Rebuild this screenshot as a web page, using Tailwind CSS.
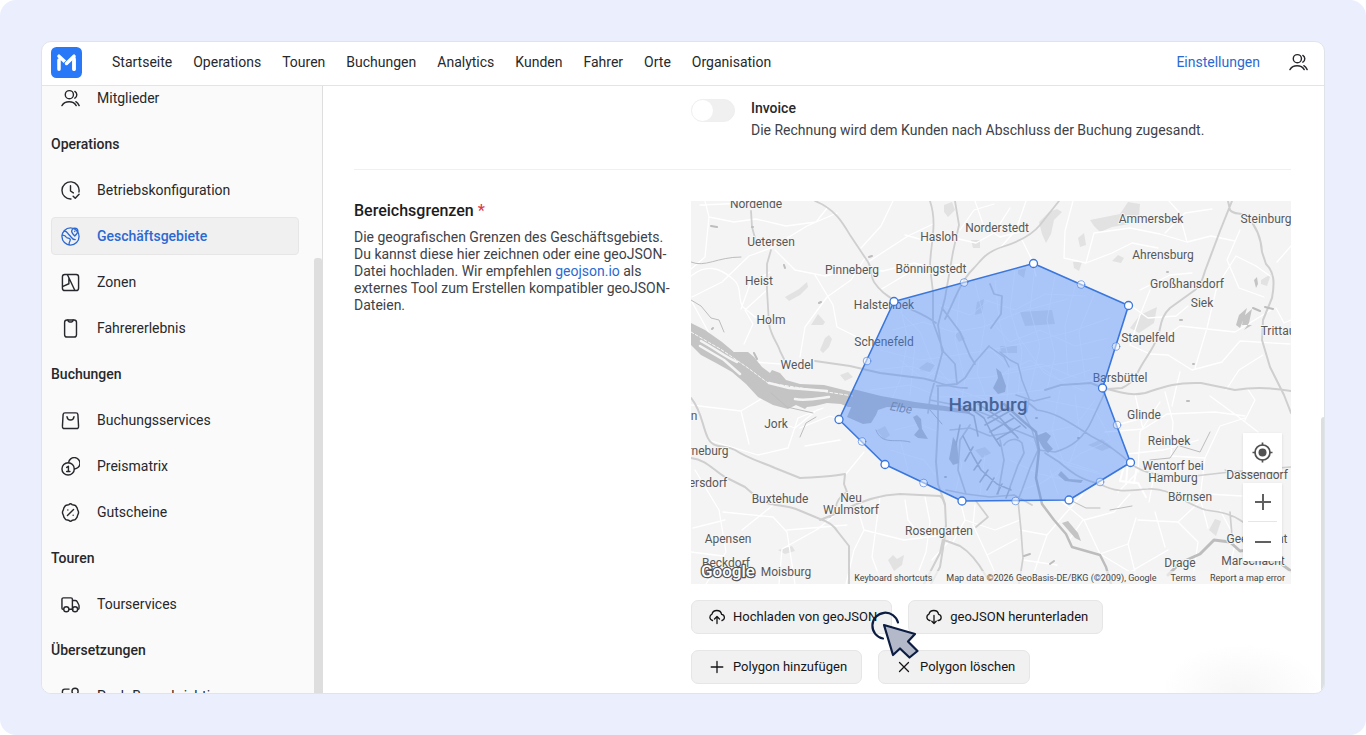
<!DOCTYPE html>
<html lang="de">
<head>
<meta charset="utf-8">
<meta name="viewport" content="width=device-width, initial-scale=1">
<title>Geschäftsgebiete</title>
<script src="https://cdn.jsdelivr.net/npm/@tailwindcss/browser@4"></script>
</head>
<body class="bg-white font-['Roboto','Liberation_Sans',sans-serif] text-[14px] leading-[18px] text-[#26282c]">
<svg class="hidden" aria-hidden="true">
  <symbol id="users" viewBox="0 0 20 20"><g fill="none" stroke="currentColor" stroke-width="1.5" stroke-linecap="round"><circle cx="8.800" cy="6" r="4.300"/><path d="M14.600 2.500a4.200 4.200 0 0 1 0 7.200M1 17.500c1.500-2.600 4.200-4 7.500-4s6 1.400 7.500 4M15.600 13.400c1.500.8 2.700 2.200 3.500 4.100"/></g></symbol>
</svg>
<div class="flex h-screen overflow-hidden rounded-2xl bg-[#ebeffd] p-[41px]">
<div class="relative flex min-w-0 flex-1 flex-col overflow-hidden rounded-[10px] border border-[#dfe3ea] bg-white">
  <header class="flex h-[44px] shrink-0 items-center border-b border-[#e4e4e6] pr-4 pb-[3px] pl-[9px]">
    <a href="#" aria-label="Startseite" class="mr-[30px]">
      <svg class="size-[31px]" viewBox="0 0 31 31"><rect width="31" height="31" rx="5.500" fill="#2878f8"/><g fill="none" stroke="#fff" stroke-width="3.500" stroke-linecap="round"><path d="M8 22.200V13M23 22.200V13M8 9.200L15 15.700"/><path d="M23 9.200L14.800 17.200" stroke="#2878f8" stroke-width="5"/><path d="M23 9.200L15.500 16.500M23 22.200V11"/></g></svg>
    </a>
    <nav class="flex gap-[21px]">
      <a href="#">Startseite</a><a href="#">Operations</a><a href="#">Touren</a><a href="#">Buchungen</a><a href="#">Analytics</a><a href="#">Kunden</a><a href="#">Fahrer</a><a href="#">Orte</a><a href="#">Organisation</a>
    </nav>
    <a href="#" class="ml-auto text-[#2b69d0]">Einstellungen</a>
    <button type="button" aria-label="Konto" class="ml-[29px]"><svg class="size-[19px]"><use href="#users"/></svg></button>
  </header>
  <div class="flex min-h-0 flex-1">
    <aside class="relative w-[281px] shrink-0 overflow-hidden border-r border-[#dededf] bg-[#fafafa]">
      <nav class="-mt-[7px] flex flex-col gap-2 pr-[23px] pl-[9px]">
        <a href="#" class="flex h-[38px] shrink-0 items-center gap-[17px] px-[10px]"><svg class="size-[19px]"><use href="#users"/></svg>Mitglieder</a>
        <h2 class="flex h-[38px] shrink-0 items-center font-medium">Operations</h2>
        <a href="#" class="flex h-[38px] shrink-0 items-center gap-[17px] px-[10px]"><svg class="size-[19px]" viewBox="0 0 20 20" fill="none" stroke="currentColor" stroke-width="1.500" stroke-linecap="round" stroke-linejoin="round"><path d="M10.500 18.900A9 9 0 1 1 18.900 11.500M10 5v5.500l3 2M12.800 16l2.200 2.200 4-4.200"/></svg>Betriebskonfiguration</a>
        <a href="#" aria-current="page" class="flex h-[38px] shrink-0 items-center gap-[17px] rounded-[4px] border border-[#e6e6e6] bg-[#f0f0f0] px-[9px] font-medium text-[#2b69d0]"><svg class="size-[19px]" viewBox="0 0 20 20" fill="none" stroke="currentColor" stroke-width="1.400" stroke-linecap="round" stroke-linejoin="round"><circle cx="10" cy="10" r="9"/><path d="M14.500 9.500c-2.200-2-3.300-3.300-3.300-4.900a3.300 3.300 0 0 1 6.600 0c0 1.600-1.100 2.900-3.300 4.900zM1.300 8.500c2.700-.3 3.500.8 4.300 2.300.8 1.300 3.300.7 4.100 2.200.7 1.500-1.700 2.500-1.200 5.700M3.500 4.200c3.500.3 3 2.800 5.300 4.300 2.400 1.600 2 5 6.200 4.800M14.500 4.500v.2"/></svg>Geschäftsgebiete</a>
        <a href="#" class="flex h-[38px] shrink-0 items-center gap-[17px] px-[10px]"><svg class="size-[19px]" viewBox="0 0 20 20" fill="none" stroke="currentColor" stroke-width="1.500" stroke-linecap="round" stroke-linejoin="round"><rect x="1.500" y="1.500" width="17" height="17" rx="2.500"/><path d="M6.800 1.800L14.500 18.200M8.300 5.500V11.300L2 14"/></svg>Zonen</a>
        <a href="#" class="flex h-[38px] shrink-0 items-center gap-[17px] px-[10px]"><svg class="size-[19px]" viewBox="0 0 20 20" fill="none" stroke="currentColor" stroke-width="1.500" stroke-linecap="round" stroke-linejoin="round"><rect x="3.800" y="1" width="12.500" height="18" rx="2.500"/><path d="M7.200 1c.2 1.800.8 2.200 1.800 2.200h2c1 0 1.600-.4 1.800-2.200"/></svg>Fahrererlebnis</a>
        <h2 class="flex h-[38px] shrink-0 items-center font-medium">Buchungen</h2>
        <a href="#" class="flex h-[38px] shrink-0 items-center gap-[17px] px-[10px]"><svg class="size-[19px]" viewBox="0 0 20 20" fill="none" stroke="currentColor" stroke-width="1.500" stroke-linecap="round" stroke-linejoin="round"><path d="M4.200 2h11.600a2 2 0 0 1 2 1.800l.7 12.400a2 2 0 0 1-2 2.300H3.500a2 2 0 0 1-2-2.300l.7-12.400A2 2 0 0 1 4.200 2zM6.300 6c.3 2.200 1.700 3.500 3.700 3.500s3.400-1.300 3.700-3.500"/></svg>Buchungsservices</a>
        <a href="#" class="flex h-[38px] shrink-0 items-center gap-[17px] px-[10px]"><svg class="size-[19px]" viewBox="0 0 20 20" fill="none" stroke="currentColor" stroke-width="1.500" stroke-linecap="round" stroke-linejoin="round"><circle cx="7.500" cy="12.500" r="6.500"/><path d="M8 5.800A6 6 0 1 1 14.100 12.600M6 11l1.800-1.300v5.300M6 15.200h3.400"/></svg>Preismatrix</a>
        <a href="#" class="flex h-[38px] shrink-0 items-center gap-[17px] px-[10px]"><svg class="size-[19px]" viewBox="0 0 20 20" fill="none" stroke="currentColor" stroke-width="1.500" stroke-linecap="round" stroke-linejoin="round"><path d="M8.300 1.700a2.500 2.500 0 0 1 3.400 0c.7.500 2.400.3 3.200.8s1.500 1.700 2 2.500c.4.800.3 1.800.9 2.800.9 1.500.9 2.900 0 4.400-.6 1-.5 2-.9 2.800-.5.800-1.200 2-2 2.500s-2.500.3-3.200.8a2.500 2.500 0 0 1-3.400 0c-.7-.5-2.400-.3-3.200-.8s-1.500-1.700-2-2.500c-.4-.8-.3-1.800-.9-2.800-.9-1.500-.9-2.900 0-4.400.6-1 .5-2 .9-2.800.5-.8 1.200-2 2-2.500s2.500-.3 3.200-.8zM13.200 6.800l-6.400 6.400M7.200 7.200v.1M12.800 12.800v.1"/></svg>Gutscheine</a>
        <h2 class="flex h-[38px] shrink-0 items-center font-medium">Touren</h2>
        <a href="#" class="flex h-[38px] shrink-0 items-center gap-[17px] px-[10px]"><svg class="size-[19px]" viewBox="0 0 20 20" fill="none" stroke="currentColor" stroke-width="1.500" stroke-linecap="round" stroke-linejoin="round"><path d="M2.500 15H2a1 1 0 0 1-1-1V4.500a1.500 1.500 0 0 1 1.500-1.500h8A1.500 1.500 0 0 1 12 4.500V14.500M8.500 15h4M12 5.800h3c.8 0 1.400.3 1.800 1l1.800 3.200c.3.500.4 1 .4 1.500V14a1 1 0 0 1-1 1h-.3"/><circle cx="5.600" cy="15" r="2.700"/><circle cx="14.800" cy="15" r="2.700"/></svg>Tourservices</a>
        <h2 class="flex h-[38px] shrink-0 items-center font-medium">Übersetzungen</h2>
        <a href="#" class="flex h-[38px] shrink-0 items-center gap-[17px] px-[10px]"><svg class="size-[19px]" viewBox="0 0 20 20" fill="none" stroke="currentColor" stroke-width="1.500" stroke-linecap="round" stroke-linejoin="round"><path d="M8.500 2.200H4A2.500 2.500 0 0 0 1.500 4.700V16A2.500 2.500 0 0 0 4 18.500h11.500A2.500 2.500 0 0 0 18 16v-5"/><circle cx="14.800" cy="4.500" r="3.200"/></svg>Push-Benachrichtigungen</a>
      </nav>
      <div class="absolute top-[172px] right-0 bottom-0 w-2 rounded-t-[3px] bg-[#dedede]"></div>
    </aside>
    <main class="min-w-0 flex-1 overflow-hidden pr-[33px] pl-[31px]">
      <div class="flex border-b border-[#f0f0f0] pt-[11px] pb-[28px] pl-[337px]">
        <input id="invoice" type="checkbox" role="switch" class="mt-[2px] mr-[16px] h-[23px] w-[44px] shrink-0 appearance-none rounded-full border border-[#efefef] bg-[#f0f0f0] before:block before:size-[21px] before:rounded-full before:bg-white">
        <label for="invoice" class="block"><span class="block leading-[22px] font-medium">Invoice</span><span class="block leading-[22px] text-[#404247]">Die Rechnung wird dem Kunden nach Abschluss der Buchung zugesandt.</span></label>
      </div>
      <section class="flex pt-[31px]">
        <div class="w-[337px] shrink-0 pr-[14px]">
          <h1 class="text-[16px] leading-[20px] font-medium text-[#1c1d20]">Bereichsgrenzen <span class="text-[#dc3c50]">*</span></h1>
          <p class="mt-2 leading-[17px] text-[#404247]">Die geografischen Grenzen des Geschäftsgebiets. Du kannst diese hier zeichnen oder eine geoJSON-Datei hochladen. Wir empfehlen <a href="#" class="text-[#2b69d0]">geojson.io</a> als externes Tool zum Erstellen kompatibler geoJSON-Dateien.</p>
        </div>
        <div class="min-w-0 flex-1">
          <div class="relative h-[383px] overflow-hidden bg-[#f4f4f4]">
            <svg class="block h-full w-full" viewBox="691 201 600 383" preserveAspectRatio="xMidYMid slice" fill="none" stroke-linejoin="round" stroke-linecap="round">
              <!-- parks and woods -->
              <g fill="#e2e2e2">
                <path d="M785 297l14-8 8-7 1 5-8 8-11 6zM811 325l7-11 7 8-2 3zM820 350l5-12 4-3 3 4-3 8-6 6zM944 205l8-3 3 8-7 7-4-5zM888 560l5-5 4 4 7-4-2 10-8 6zM1039 222l10-10 8-3 5 3-8 8-3 14-5 9-4-9zM1090 220l20-4 10-2 8-12 12 2-1 12-10 8-17 3-12 5-6-6zM1112 261l6-6 6 3-3 5zM1130 328l10-13 17-8-3 16-15 10zM1078 238l6-5 2 12-6 2zM1073 262h9l-3 9-5-3zM1209 530l6-11 6 2-5 15zM1261 280l10-6-4 12-6-2zM778 550l14-4 3 5-10 3zM840 375l8-3 5 5-8 4z"/>
                <path d="M971 240h9v8h-7zM977 302l7-3-2 14-7 2zM919 368l8-6 8 3-5 7-9-1zM1020 312l32-2 3 14-30 2zM1000 346h17v7h-16zM1018 270l8-2-2 10-6-4zM1088 445l14-6 10 8-10 4zM877 430l8-4 5 9-6 5zM975 450l10-3 6 6-9 5zM955 335l5-4 5 8-6 3z"/>
              </g>
              <!-- local streets -->
              <g stroke="#fff" stroke-width="1.300">
                <path d="M691 276c15-12 28-9 42 3 10 8 4 20 10 28l12 10 18 4M692 297l30-15 27-26 22-8M705 201l4 16 25 5 22-3 30 7 30-4 12-15M709 217l-4 40-14 12M771 248l36-22 30-13M775 250l20 20 30 6 30-7 28 2 31-8 24 6 27-6M700 205l50-2M770 272l-20 12-9 25M767 290l-22 20 8 14-9 20M800 357l5-30 22-30 24-17 14-22M815 275l18 30 4 22 20 10 10 5M880 290l30-18 32 2M868 262l40-26 25-12M893 201l-12 25-20 22M905 235l25 7 20-5 26 6 18-10 16-25M960 230l14-20 20-6M975 201l9 26 16 10 20-5M1000 248l16-18 10-29M1022 240l10 20 4 16M1073 201l-8 30-1 27M1064 258l22 5 26-10 20-10 26 5M1086 263l8-30 36-5 30 6 27 8 24-6 24 5M1187 242l-8-30-10-11M1165 233l20-20 27-4M1130 305l18 13 28-2 12-10M1150 290l-10 25-10 30 20 9 18 1M1140 290l30-15 22-2M1168 355l24 15 30-8 18-21 50 3M1180 372l-3 12-5 22M1195 368l12-40 10-42 19-30M1160 340l20-14 55 6 36-22M1236 256l20 10 14 10M1240 230l-13 30 12 28 25 9M1276 308l8 15 7-3M1277 262l14-16M1226 390l13-20 24-15"/>
                <path d="M692 302l22 40 40 20 40 3M691 405l50 6 30-18M708 440l50 15 30-7 10-30 25-10M741 411l8 33M695 470l24 40 7 42-20 32M723 512l50 5 14 15 8 52M742 530l40-32M725 520l-32 8M691 552l32 4M787 530l60-5M779 584l3-35 36-20 20-17M800 428l30-12 12 4M771 420l24 8 22-18M840 440l-35 6M846 474l18-22M855 500l9 30-10 20-8 34M864 530l40 10 32-4M880 497l-8 60 10 27M905 500l3 20 14 18M925 497l5 25-4 30-12 32M950 540l-18 20M960 500l5 20 30 10 25-10M965 520l-12 22M975 505l-2 20 14 30 13 29M987 555l30-16M1020 530l27 5 17-20 19-21M1047 535l-17 49M1023 560l34 5M1060 500l24 20 30-8 16-18M1083 520l-14 20M1084 520l16 34 28-10 8-26M1128 544l10 40M1100 554l30 18 38-22M1138 520l40 2 20 20-6 42M1178 522l30-28 34 2M1118 492l18-18M1138 472l2-40 20-30M1105 432l38-3 24-15 48-2 30 4M1143 429l-8-35M1165 392l8 30-2 34M1171 456l34 2 15-32 25-8M1205 458l-5 40 8 30M1117 425l40-11M1127 454l36-4 35-10M1210 396l30 22 18 14M1245 420l10-20-8-12M1220 510l16 30-10 44M1155 470l-6 32M1155 512l10 35"/>
                <path d="M1125 462l12 5-3 16-14-2zM1120 481l18 2 8 14M1128 461l-2 23" stroke-width="2"/>
              </g>
              <!-- city street grid -->
              <g stroke="#fff" stroke-width="1" opacity="0.600">
                <path d="M900 312l20 20 12 30 25 28 30 10M893 330l30-8 30 10 30-5 40-16 45-12M880 350l40 10 30-4 40-6 40-8 40-10 40-14M875 370l35-4 40 14 40-3 50-10 60-10M870 390l40-5 30 12 60-2 50-6 45-10M900 305l8 35-8 40-10 24M915 345l-5 50M960 290l-5 50 10 40-5 30M975 283l10 40-8 50 10 27M995 280l4 40 10 40-2 40M1015 270l-5 40 12 40-4 45M1035 266l-5 44 10 36-10 44M1055 276l-8 44 8 36-8 34M1075 286l-10 40 3 50M1095 292l-16 40 6 46M985 300l30 10 30-16 40 2M990 320l20 22 30-12 35 16 33-8M992 350l20 20 30-6 35 14M1000 375l30-15 30 20 30-10M1016 333l28 40 40 18M940 305l30 10 20-15M900 360l24 20 14-12"/>
                <path d="M1045 400l50 10 14 26M1060 390l-8 40 12 34 36 10M1075 395l5 40-12 32-30 18M1095 400l-20 26-40 8M1030 440l30 20 38 12M1110 440l-30 14-40 30-20 6M1010 460l30 14 44 10M895 430l24-6 20 8M890 450l34 10 14 18M900 440l8 30-8 4M950 440l12 24-8 34M985 455l-5 40M1000 470l-14 24M1050 470l8 24"/>
              </g>
              <!-- main roads -->
              <g stroke="#cfcfcf" stroke-width="1.800">
                <path d="M815 201c20 8 28 22 35 34l18 27c5 8 2 14 6 20 6 9 12 13 20 18 12 9 28 12 42 23M751 211l1 16 3 11M771 250l-4 14v26l2 34c2 12 9 20 11 27l5 10M815 361l35 5 30 7 40 5c16 2 26 10 47 10M930 201c8 24 0 44 0 66l3 25v30l10 28-7 26-6 22-2 15M955 201l4 24-6 27-8 46-7 27 4 26M1059 201l-19 24c-8 10-22 17-38 22-18 6-21 14-29 22-14 14-21 38-28 50M942 308l18 24 10 24 5 8M942 350l13 14 2 20 8-6 10-16 14-16M957 384l-20 2M990 284l4 10 8 2-1 18-10 14"/>
                <path d="M1232 201l-12 30-15 40c-3 10-5 15-10 19l-25 18c-10 9-9 20-12 28-5 14-13 22-20 36-5 10-10 13-16 16l-14 1M1228 201l2 9c5 6 12 1 18 8 9 9 13 20 14 34l4 12c8 8 9 18 6 34l-9 22-1 20 8 27 14 28 7 18M1045 390l16-5 30-2 12 5c20 5 28 8 42 5 18-6 30-11 56-10l34 7c18-3 34-3 56 1" stroke-width="2"/>
                <path d="M691 398c10 12 11 26 16 38 5 14 18 8 28 14 12 8 26 12 40 18l25 10c16-1 30-1 45-4l-1 10 3 8c-8 5-11 10-11 16l-6 9M691 458c16 2 22 12 34 19l20 10 15 13c12 7 22 4 36 9l24 10c10 3 15 8 18 13l11 14v40M820 520l20-8c18-10 36-17 60-18l40 2c4 2 3 5 5 9M938 388v36l-2 38 2 22 7 20 1 22-2 16-4 25-9 17M946 525l-6 28-16 31M944 540l16 6c10 6 18 16 26 30" stroke-width="2"/>
                <path d="M1107 388l-15 32c-8 18-20 27-37 32l-17-2-8 18-8 22-4 10 3 30 2 28-4 26M1045 453l14 9c12 10 20 17 41 22 18 10 30 6 48 5 22-2 36 15 58 21 15 2 26 4 37 12M1025 400l12 10c18 2 32 12 54 26 16 8 28 16 40 28 14 10 26 11 55 13l44-5 61-5M946 490l20 4 24 3 24-2 18 10M976 501l12 16-12 10M1230 512l2 24M970 425l-10 15-2 30 8 24M1000 440l4 20-6 34M1004 445c5-7 14-7 18-2l2 10-6 12-8 22" stroke-width="1.700"/>
                <path d="M930 400l40 8 20 8 20 12 30 12M1000 352l10 8 8 4 4 16 7 18-2 14M990 347l14 10 5 10M1016 395l18 6 16-4M1022 410l10 20 6 20M950 430l20-2 20 8 22-4" stroke-width="1.500"/>
              </g>
              <!-- river Elbe, harbour and lakes -->
              <g fill="#c4c4c4">
                <path d="M691 323l14 7 17 12 12 10h14l6 5 8 10 8 6 2-3 8 3 6 7 14 4 24 1 24 6 9 2v14l-9 0-7-3-14-1-12 3-8 1-2 2-9-4-8 4-15-4-15-8-12-13-14-12-16-9-15-8-12-12-8-7z"/>
                <path d="M853 389l28 7 34 6 30 4 25 5v3l-25-3-30-3-28-1-9 3-2 5-5 8-8 1-16-7 6-14z"/>
                <path d="M996 368l5 4 5 14-1 6-7 2-5-6 5-10zM1036 436l10-4 5 4-4 6 6 7-5 4-5-5zM1058 475l3-4 8 8 14 1-2 3-16-2zM1062 523l6-2 10 12 3 8-6-3zM953 437l4 6 2 20-6 2-4-6 2-10zM917 415l4 4 1 10 6 10-10-1-4-3 5-6-6-12zM1252 325l-10 0 0 0 2-9 8-7-3 14-5 7zM1236 325l3-10 8-7-3 10-4 10zM1256 288l-2-8 3-3 1 7z"/>
              </g>
              <path d="M701 341c15 8 24 16 36 21M769 383l20 5 38 3M795 399c10 2 20 0 34-2M700 346l24 14 16 14" stroke="#f4f4f4" stroke-width="2.500"/>
              <path d="M691 332l31 18 26 18 20 15 40 6 45 7" stroke="#f6f6f6" stroke-width="1" stroke-dasharray="3 2"/>
              <g stroke="#bdbdbd">
                <path d="M1004 404l20 18 12 10 3 18-3 28 6 26 12 16 12 14 6 13 14 4 14 4 6 12 5 17" stroke-width="2.500"/>
                <path d="M1168 575l12-12 20-9 14-14 16 2 10 9 16-2 16 8 19 14" stroke-width="3"/>
                <path d="M970 408l14 10 8 16 8 12M978 404l22 14 18 20M960 408l14 8 4 20M963 436l10 20 8 14 16 14 14 6M973 447l-8 14M981 460l-7 10M988 470l-8 12M994 478l-7 12M1002 484l-5 10M1010 488l-4 10M985 425l25-14M990 432l24-14M996 440l24-14M988 418l18-10M1010 414l16 14M1004 424l10 10M960 425l-4 20" stroke-width="1.600"/>
                <path d="M876 430c6 16 20 8 34 12M930 410l12 14M1225 470l8 2M691 262c14 6 26-5 50-5M691 300l10 6 10 12 8 2 5 12M800 437l6-14 10-6M771 393l16 14 26 6M1110 510l22-4M1150 460l20-2 8-12M1180 446l20 6 10-20M1070 500l16 8 14 0" stroke-width="1"/>
                <path d="M784 265l1 3M819 303l2-1M869 257l3-1M1167 272h1M712 329l1-1M752 227h1M754 353l3 6M1187 401l2 0M1193 364h1M1180 320h2M1253 308l7 3M1265 307l8 2M1036 418h1M945 477h1M1078 438h1M717 227l-6-1M1024 556l6-2M1050 564l4-3" stroke-width="2"/>
              </g>
              <!-- place names -->
              <g font-family="Roboto, 'Liberation Sans', sans-serif" font-size="12" fill="#585858" stroke="#f6f6f6" stroke-width="2" paint-order="stroke" text-anchor="middle">
                <text x="756" y="208">Nordende</text><text x="771" y="246">Uetersen</text><text x="759" y="285">Heist</text><text x="771" y="324">Holm</text><text x="797" y="369">Wedel</text><text x="852" y="274">Pinneberg</text><text x="931" y="273">Bönningstedt</text><text x="939" y="241">Hasloh</text><text x="997" y="232">Norderstedt</text><text x="884" y="309">Halstenbek</text><text x="884" y="346">Schenefeld</text><text x="1151" y="223">Ammersbek</text><text x="1266" y="223">Steinburg</text><text x="1163" y="259">Ahrensburg</text><text x="1187" y="288">Großhansdorf</text><text x="1202" y="307">Siek</text><text x="1278" y="335">Trittau</text><text x="1148" y="342">Stapelfeld</text><text x="1120" y="382">Barsbüttel</text><text x="776" y="428">Jork</text><text x="1144" y="419">Glinde</text><text x="1169" y="445">Reinbek</text><text x="1173" y="470">Wentorf bei</text><text x="1173" y="482">Hamburg</text><text x="1257" y="479">Dassendorf</text><text x="1190" y="501">Börnsen</text><text x="780" y="503">Buxtehude</text><text x="851" y="502">Neu</text><text x="851" y="514">Wulmstorf</text><text x="939" y="535">Rosengarten</text><text x="728" y="543">Apensen</text><text x="726" y="567">Beckdorf</text><text x="786" y="576">Moisburg</text><text x="1180" y="567">Drage</text><text x="1257" y="543">Geesthacht</text><text x="1253" y="565">Marschacht</text><text x="708" y="455">rneburg</text><text x="708" y="487">ersdorf</text><text x="694" y="420">n</text>
                <text x="901" y="412" fill="#909090" stroke="none" font-style="italic" transform="rotate(10 901 408)">Elbe</text>
                <text x="988" y="411" font-size="19" font-weight="500" fill="#505050" stroke="none">Hamburg</text>
              </g>
              <!-- editable area -->
              <path d="M1033.500 263.500L1128.500 305.500L1102.500 388L1130.500 462.500L1069 500L962 501L885 464.500L839 419.500L894 301.500Z" fill="#3b82ff" fill-opacity="0.400" stroke="#3a76dc" stroke-width="1.600"/>
              <g fill="#fff" fill-opacity="0.500" stroke="#3a76dc" stroke-opacity="0.600">
                <circle cx="1081" cy="284.500" r="3.800"/><circle cx="1116" cy="346.500" r="3.800"/><circle cx="1117" cy="425" r="3.800"/><circle cx="1100" cy="482" r="3.800"/><circle cx="1015.500" cy="501" r="3.800"/><circle cx="923.500" cy="483" r="3.800"/><circle cx="862" cy="441.500" r="3.800"/><circle cx="867" cy="361" r="3.800"/><circle cx="964" cy="282.500" r="3.800"/>
              </g>
              <g fill="#fff" stroke="#3a76dc" stroke-width="1.300">
                <circle cx="1033.500" cy="263.500" r="4"/><circle cx="1128.500" cy="305.500" r="4"/><circle cx="1102.500" cy="388" r="4"/><circle cx="1130.500" cy="462.500" r="4"/><circle cx="1069" cy="500" r="4"/><circle cx="962" cy="501" r="4"/><circle cx="885" cy="464.500" r="4"/><circle cx="839" cy="419.500" r="4"/><circle cx="894" cy="301.500" r="4"/>
              </g>
              <text x="701" y="577" font-family="Roboto, 'Liberation Sans', sans-serif" font-size="17" font-weight="500" fill="#fff" stroke="#555" stroke-width="2.500" paint-order="stroke">Google</text>
            </svg>
            <div class="absolute right-[9px] bottom-[23px] flex w-[39px] flex-col gap-[11px]">
              <button type="button" aria-label="Standort" class="flex h-[39px] items-center justify-center bg-white text-[#505050] shadow-sm"><svg class="size-[21px]" viewBox="0 0 21 21" fill="none" stroke="currentColor" stroke-width="1.700"><circle cx="10.500" cy="10.500" r="7.500"/><circle cx="10.500" cy="10.500" r="4" fill="currentColor" stroke="none"/><path d="M10.500 0.500v3M10.500 17.500v3M0.500 10.500h3M17.500 10.500h3"/></svg></button>
              <div class="flex flex-col bg-white px-[5px] text-[#606060] shadow-sm">
                <button type="button" aria-label="Vergrößern" class="flex h-[39px] items-center justify-center border-b border-[#e6e6e6]"><svg class="size-4" viewBox="0 0 16 16" stroke="currentColor" stroke-width="2"><path d="M8 0v16M0 8h16"/></svg></button>
                <button type="button" aria-label="Verkleinern" class="flex h-[39px] items-center justify-center"><svg class="size-4" viewBox="0 0 16 16" stroke="currentColor" stroke-width="2"><path d="M0 8h16"/></svg></button>
              </div>
            </div>
            <div class="absolute right-0 bottom-0 flex h-[13px] items-center gap-[14px] bg-[#f5f5f5]/70 pr-[6px] text-[9px] leading-[12px] whitespace-nowrap text-[#444]">
              <button type="button">Keyboard shortcuts</button><span>Map data ©2026 GeoBasis-DE/BKG (©2009), Google</span><a href="#">Terms</a><a href="#">Report a map error</a>
            </div>
          </div>
          <div class="mt-4 flex flex-col gap-4 text-[13px] text-[#141517]">
            <div class="flex gap-4">
              <div class="relative">
                <button type="button" class="flex h-[34px] items-center gap-2 rounded-[7px] border border-[#e6e6e6] bg-[#f1f1f1] pr-[14px] pl-[17px]"><svg class="size-4" viewBox="0 0 16 16" fill="none" stroke="currentColor" stroke-width="1.300" stroke-linecap="round" stroke-linejoin="round"><path d="M3.500 11.500A3.300 3.300 0 0 1 3 5.200C3.500 3 5.500 1.500 7.800 1.500c2.500 0 4.400 1.600 4.800 3.900a3.100 3.100 0 0 1 .4 6.100M8 14.500V7.800M5.500 10L8 7.500l2.500 2.500"/></svg>Hochladen von geoJSON</button>
                <svg class="absolute top-[10px] left-[178px] z-10 h-[52px] w-[52px]" viewBox="869 610 52 52" fill="none" stroke="#0c1c42" stroke-width="2.200" stroke-linejoin="round" stroke-linecap="round" aria-hidden="true"><path d="M898 622.500A13 13 0 1 0 883 638.500"/><path d="M884 625L915 634L908 641.500L917.500 651L909.500 657.500L900 648.500L893 655Z" fill="#b3b9c8"/></svg>
              </div>
              <button type="button" class="flex h-[34px] items-center gap-2 rounded-[7px] border border-[#e6e6e6] bg-[#f1f1f1] pr-[14px] pl-[17px]"><svg class="size-4" viewBox="0 0 16 16" fill="none" stroke="currentColor" stroke-width="1.300" stroke-linecap="round" stroke-linejoin="round"><path d="M4 11.500h-.5A3.300 3.300 0 0 1 3 5.200C3.500 3 5.500 1.500 7.800 1.500c2.500 0 4.400 1.600 4.800 3.900a3.100 3.100 0 0 1 0 6.100H12M8 6.500v8M5.800 12.300L8 14.500l2.200-2.200"/></svg>geoJSON herunterladen</button>
            </div>
            <div class="flex gap-4">
              <button type="button" class="flex h-[34px] items-center gap-2 rounded-[7px] border border-[#e6e6e6] bg-[#f1f1f1] pr-[14px] pl-[17px]"><svg class="size-4" viewBox="0 0 16 16" stroke="currentColor" stroke-width="1.300" stroke-linecap="round"><path d="M8 2.500v11M2.200 8h11.600"/></svg>Polygon hinzufügen</button>
              <button type="button" class="flex h-[34px] items-center gap-2 rounded-[7px] border border-[#e6e6e6] bg-[#f1f1f1] pr-[14px] pl-[17px]"><svg class="size-4" viewBox="0 0 16 16" stroke="currentColor" stroke-width="1.300" stroke-linecap="round"><path d="M3.500 3.500l9 9M12.500 3.500l-9 9"/></svg>Polygon löschen</button>
            </div>
          </div>
        </div>
      </section>
    </main>
  </div>
  <div class="pointer-events-none absolute right-0 bottom-0 h-[50px] w-[164px] bg-radial-[at_50%_100%] from-[#f6f6f6] to-transparent to-70%"></div>
  <div class="absolute top-[375px] right-0 bottom-0 w-[3px] rounded-tl bg-[#dcdfe2]"></div>
</div>
</div>
</body>
</html>
